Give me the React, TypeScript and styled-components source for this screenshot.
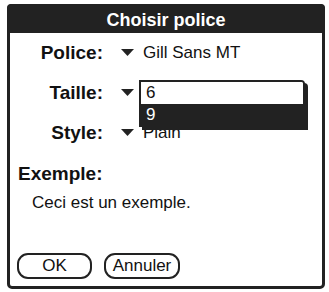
import React from "react";
import styled, { createGlobalStyle } from "styled-components";

const Global = createGlobalStyle`
  html, body { margin: 0; padding: 0; background: #fff; }
  body { width: 329px; height: 292px; overflow: hidden; font-family: "Liberation Sans", Arial, sans-serif; }
`;

const DARK = "#222222";

const Frame = styled.div`
  position: relative;
  margin: 4px 0 0 7px;
  width: 318px;
  height: 285px;
  box-sizing: border-box;
  border: 3px solid ${DARK};
  border-radius: 5px;
  display: flex;
  flex-direction: column;
  background: #fff;
`;

const TitleBar = styled.div`
  height: 26px;
  margin: -3px -3px 0 -3px;
  padding-top: 3px;
  background: ${DARK};
  border-radius: 4px 4px 0 0;
  color: #fff;
  font-weight: bold;
  font-size: 18px;
  line-height: 26px;
  text-align: center;
`;

const Body = styled.div`
  flex: 1;
  display: flex;
  flex-direction: column;
  padding: 9px 0 7px 0;
`;

const Rows = styled.div`
  display: flex;
  flex-direction: column;
  gap: 18px;
`;

const Row = styled.div`
  display: flex;
  align-items: flex-start;
  height: 22px;
`;

const Label = styled.div`
  width: 93px;
  text-align: right;
  font-weight: bold;
  font-size: 19px;
  line-height: 22px;
  color: #111;
`;

const Arrow = styled.svg`
  margin: 7px 0 0 18px;
  width: 13px;
  height: 7px;
  flex: none;
`;

const Value = styled.div`
  margin-left: 9px;
  font-size: 17px;
  line-height: 22px;
  color: #111;
`;

const Heading = styled.div`
  margin: 19px 0 0 8px;
  font-weight: bold;
  font-size: 19px;
  line-height: 22px;
  color: #111;
`;

const Sample = styled.div`
  margin: 8px 0 0 22px;
  font-size: 17px;
  line-height: 20px;
  color: #111;
`;

const Buttons = styled.div`
  margin-top: auto;
  display: flex;
  gap: 12px;
  padding-left: 7px;
`;

const Button = styled.button<{ $w: number }>`
  width: ${(p) => p.$w}px;
  height: 26px;
  box-sizing: border-box;
  border: 2px solid ${DARK};
  border-radius: 11px;
  background: #fff;
  font-family: "Liberation Sans", Arial, sans-serif;
  font-size: 17px;
  line-height: 22px;
  color: #111;
  padding: 0;
`;

const PopupList = styled.div`
  position: absolute;
  left: 129px;
  top: 73px;
  width: 166px;
  height: 47px;
  box-sizing: border-box;
  border: 2px solid ${DARK};
  border-radius: 0 4px 0 0;
  background: #fff;
  box-shadow: 3px 3px 0 ${DARK};
  display: flex;
  flex-direction: column;
  overflow: hidden;
`;

const Item = styled.div<{ $selected?: boolean }>`
  flex: 1;
  padding-left: 5px;
  font-size: 17px;
  line-height: 21px;
  background: ${(p) => (p.$selected ? DARK : "#fff")};
  color: ${(p) => (p.$selected ? "#fff" : "#111")};
`;

const DownArrow = () => (
  <Arrow viewBox="0 0 13 7">
    <polygon points="0,0 13,0 6.5,7" fill={DARK} />
  </Arrow>
);

export default function App() {
  return (
    <>
      <Global />
      <Frame>
        <TitleBar>Choisir police</TitleBar>
        <Body>
          <Rows>
            <Row>
              <Label>Police:</Label>
              <DownArrow />
              <Value>Gill Sans MT</Value>
            </Row>
            <Row>
              <Label>Taille:</Label>
              <DownArrow />
            </Row>
            <Row>
              <Label>Style:</Label>
              <DownArrow />
              <Value>Plain</Value>
            </Row>
          </Rows>
          <Heading>Exemple:</Heading>
          <Sample>Ceci est un exemple.</Sample>
          <Buttons>
            <Button $w={75}>OK</Button>
            <Button $w={76}>Annuler</Button>
          </Buttons>
        </Body>
        <PopupList>
          <Item>6</Item>
          <Item $selected>9</Item>
        </PopupList>
      </Frame>
    </>
  );
}
